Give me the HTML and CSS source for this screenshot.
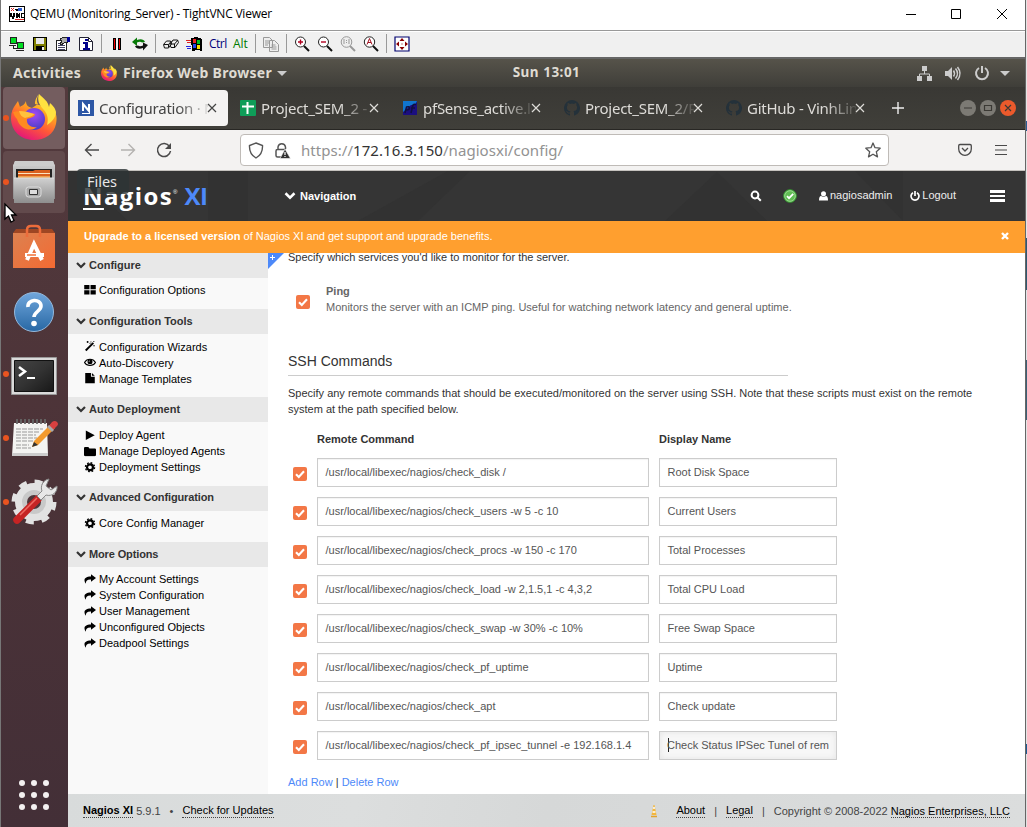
FILE: index.html
```html
<!DOCTYPE html>
<html lang="en">
<head>
<meta charset="utf-8">
<title>QEMU (Monitoring_Server) - TightVNC Viewer</title>
<link rel="stylesheet" href="styles.css">
</head>
<body>
<svg class="defs" width="0" height="0">
  <defs>
    <linearGradient id="fox" x1=".8" y1="0" x2=".3" y2="1"><stop offset="0" stop-color="#fff44f"/><stop offset=".35" stop-color="#ffa820"/><stop offset=".65" stop-color="#ff5a36"/><stop offset="1" stop-color="#e3147c"/></linearGradient>
    <radialGradient id="globe" cx=".5" cy=".3" r=".8"><stop offset="0" stop-color="#a04bf5"/><stop offset="1" stop-color="#3f3bbd"/></radialGradient>
    <linearGradient id="metal" x2="0" y2="1"><stop offset="0" stop-color="#d0d0d0"/><stop offset="1" stop-color="#8e8e8e"/></linearGradient>
    <linearGradient id="bag" x2="1" y2="1"><stop offset="0" stop-color="#dc8150"/><stop offset="1" stop-color="#f46a32"/></linearGradient>
    <linearGradient id="blue" x2="0" y2="1"><stop offset="0" stop-color="#70a6dc"/><stop offset="1" stop-color="#2868a4"/></linearGradient>
    <linearGradient id="term" x2="1" y2="1"><stop offset="0" stop-color="#444"/><stop offset=".5" stop-color="#333"/><stop offset="1" stop-color="#181818"/></linearGradient>
  </defs>
  <symbol id="i-fox" viewBox="0 0 46 46">
    <path d="M28 0c-4 5-4 8-4 10 6 1 9 3 12 6-1 2 1 4 2 4l5-4c3 5 3 9 2 14C43 40 34 46 23 46 10 46 0 37 0 24c0-6 2-10 5-14l2-3 2 6c2-2 4-1 6-6 0 4 2 6 6 7l6-4C25 7 26 3 28 0z" fill="url(#fox)"/>
    <circle cx="23" cy="25" r="11" fill="url(#globe)"/>
    <path d="M28 0c-2 6 0 10 4 15 4 4 6 9 4 16 5-3 9-8 9-13-1-5-4-7-6-9l-1 4C37 7 33 5 28 0z" fill="#ffe240"/>
    <path d="M2 18c3-1 6-1 9 0 5 1 9 1 13 2 0 3-5 4-8 5-1 6 5 9 10 8-5 5-17 3-20-8C4 23 3 21 2 18z" fill="#ff8a21"/>
    <path d="M8 17c5 0 10 1 15 3-1 2-5 3-9 4-3-1-5-3-6-7z" fill="#ffc13d"/>
  </symbol>
  <symbol id="i-chev" viewBox="0 0 10 8"><path d="M1 2l4 4 4-4" fill="none" stroke="currentColor" stroke-width="2.2"/></symbol>
  <symbol id="i-grid" viewBox="0 0 11 10"><path d="M0 0h5v4H0zM6 0h5v4H6zM0 5h5v4H0zM6 5h5v4H6z" fill="currentColor"/></symbol>
  <symbol id="i-wand" viewBox="0 0 11 11"><path d="M1 10L9 2" stroke="currentColor" stroke-width="2"/><path d="M2 1h2M3 0v2M6 1h1M9 5h1.5M9.500 0v1M5 2.500h1" stroke="currentColor" stroke-width="1"/></symbol>
  <symbol id="i-eye" viewBox="0 0 12 10"><path d="M.5 5.200C3 1 9 1 11.500 5.200 9 9.200 3 9.200.5 5.200z" fill="none" stroke="currentColor" stroke-width="1.100"/><circle cx="6" cy="4.600" r="2.500" fill="currentColor"/><path d="M5 4.500a1 1 0 011-1" stroke="#fff" fill="none" stroke-width=".6"/></symbol>
  <symbol id="i-file" viewBox="0 0 10 11"><path d="M0 0h6v4h4v7H0zM7 0l3 3H7z" fill="currentColor"/></symbol>
  <symbol id="i-play" viewBox="0 0 10 10"><path d="M1 .5l8.500 4.500L1 9.500z" fill="currentColor"/></symbol>
  <symbol id="i-folder" viewBox="0 0 11 9"><path d="M0 1.500Q0 .5 1 .5h3l1 1.500h5q1 0 1 1V8q0 1-1 1H1Q0 9 0 8z" fill="currentColor"/></symbol>
  <symbol id="i-gear" viewBox="0 0 10 10"><circle cx="5" cy="5" r="2.800" fill="none" stroke="currentColor" stroke-width="2.100"/><circle cx="5" cy="5" r="4.300" fill="none" stroke="currentColor" stroke-width="1.400" stroke-dasharray="1.690 1.690"/></symbol>
  <symbol id="i-share" viewBox="0 0 12 10"><path d="M7 0l5 3.700-5 3.800V5.200C3.500 5 2 6 1.700 9.500-.5 6-.3 2.300 7 2.200z" fill="currentColor"/></symbol>
  <symbol id="i-check" viewBox="0 0 14 14"><path d="M3 7.200l2.800 2.800L11 4.200" fill="none" stroke="#fff" stroke-width="2.100"/></symbol>
  <symbol id="i-x" viewBox="0 0 10 10"><path d="M1 1l8 8M9 1L1 9" fill="none" stroke="currentColor" stroke-width="1.200"/></symbol>
  <symbol id="i-power" viewBox="0 0 16 16"><path d="M5 3a6 6 0 106 0M8 1v7" fill="none" stroke="currentColor" stroke-width="2"/></symbol>
  <symbol id="i-git" viewBox="0 0 16 16"><path d="M8 0a8 8 0 00-2.500 15.600c.4.100.5-.2.500-.4V13.600c-2.200.5-2.700-1-2.700-1-.4-.9-.9-1.200-.9-1.200-.7-.5.1-.5.100-.5.800.1 1.200.8 1.200.8.700 1.200 1.900.9 2.300.7.100-.5.300-.9.500-1.100-1.800-.2-3.600-.9-3.600-4 0-.9.300-1.600.8-2.100-.1-.2-.4-1 .1-2.100 0 0 .7-.2 2.200.8a7.500 7.500 0 014 0c1.500-1 2.200-.8 2.200-.8.4 1.100.2 1.900.1 2.100.5.600.8 1.300.8 2.100 0 3.100-1.900 3.700-3.700 3.900.3.300.6.800.6 1.500v2.500c0 .2.100.5.500.4A8 8 0 008 0z" fill="#24313a"/></symbol>
</svg>

<div class="viewer">
  <header class="titlebar">
    <svg class="vnc-logo" width="16" height="16" viewBox="0 0 16 16" shape-rendering="crispEdges"><path d="M.5.500h15v15H.5z" fill="#fff" stroke="#000"/><path d="M2 2h1v1H2zM4 2h1v1H4zM3 3h1v1H3zM2 4h1v1H2zM4 4h1v1H4z" fill="#d22"/><path d="M6 3h4M7 4h5" stroke="#000"/><path d="M9 2h4v3H9z" fill="#2a5bd0"/><path d="M1 7h2v3h1V7h2v4H5v2H3v-2H1zM7 7h2l1 2V7h1v5h-1L9 10v2H7zM12 7h3v1h-2v3h2v1h-3z"/><path d="M6 13h9v1H6z" fill="#d22"/></svg>
    <span class="title">QEMU (Monitoring_Server) - TightVNC Viewer</span>
    <svg class="win-controls" width="104" height="12" viewBox="0 0 104 12" fill="none" stroke="#000"><path d="M1 6.500h10M46.500 1.500h9v9h-9zM92 1l10 10M102 1L92 11"/></svg>
  </header>

  <div class="toolbar">
    <svg width="16" height="16" viewBox="0 0 16 16" shape-rendering="crispEdges"><path d="M1 1h7v7H1z" fill="#222"/><path d="M2 2h5v5H2z" fill="#0d2"/><path d="M8 6h7v7H8z" fill="#222"/><path d="M9 7h5v5H9z" fill="#0d2"/><path d="M0 9.500h7M7 14.500h8M4.500 9v3h3" stroke="#222" fill="none"/></svg>
    <svg width="16" height="16" viewBox="0 0 16 16" shape-rendering="crispEdges"><path d="M1 1h14v14H1z"/><path d="M2 2h2v6h8V2h2v12H2z" fill="#808000"/><path d="M4 2h8v6H4z" fill="#e8e8e8"/><path d="M4 10h8v5H4z"/><path d="M10 11h2v3h-2z" fill="#eee"/></svg>
    <svg width="16" height="16" viewBox="0 0 16 16" shape-rendering="crispEdges"><path d="M1.500 4.500h10v10h-10z" fill="#fff" stroke="#222"/><path d="M3 9h7M3 11h7M3 13h7M3 7h3" stroke="#446"/><path d="M5 3l4-2h4v5l-4 1-3 2-1-2 2-1z" fill="#aaa" stroke="#222"/><path d="M12 1h3v5h-3z" fill="#009"/></svg>
    <svg width="16" height="16" viewBox="0 0 16 16"><path d="M1.500 1.500h9l4 4v9h-13z" fill="#fff" stroke="#223"/><path d="M10.500 1.500v4h4" fill="none" stroke="#223"/><path d="M7 3h3v2H7zM5 6h5v6h2v2H5v-2h2V8H5z" fill="#00008b"/></svg>
    <i class="sep"></i>
    <svg width="16" height="16" viewBox="0 0 16 16" shape-rendering="crispEdges"><path d="M4 2h3v12H4zM9 2h3v12H9z"/><path d="M5 3h1v10H5zM10 3h1v10h-1z" fill="#e00"/></svg>
    <svg width="16" height="16" viewBox="0 0 16 16"><path d="M0 6l5-4.500V4c4-1.500 7-.5 8 2l-3 .5C9 5.500 7 5.500 5 6.500V10z" fill="#087a08"/><path d="M16 9l-5 5.500V12c-4 1.500-7 .5-8-2l3-.5c1 1 3 1 5 0V6.500z" fill="#111"/></svg>
    <i class="sep"></i>
    <svg width="16" height="16" viewBox="0 0 16 16" fill="#eee" stroke="#111"><path d="M.5 8.500l3-3.500h4l1 3-3 4h-4zM7 8.500L10 4h4.500l1 2.500-3.500 5H8zM1 8.500h4.500l3-3.500M5.500 8.500v3M7.500 8h4l3.500-4M11.500 8v3.500"/></svg>
    <svg width="16" height="16" viewBox="0 0 16 16" shape-rendering="crispEdges"><path d="M5 2l5-1 6 2v12l-4-1-6 1z"/><path d="M7 3h3v4H7z" fill="#e22"/><path d="M11 4h3v4h-3z" fill="#0b2"/><path d="M7 8h3v4H7z" fill="#24e"/><path d="M11 9h3v4h-3z" fill="#fd0"/><path d="M0 4h5M1 6h4" stroke="#d22"/><path d="M0 10h5M1 12h4" stroke="#22d"/></svg>
    <span class="key ctrl">Ctrl</span>
    <span class="key alt">Alt</span>
    <i class="sep"></i>
    <svg width="16" height="16" viewBox="0 0 16 16" fill="#eee" stroke="#999"><path d="M.5 1.500h6l3 3v7h-9zM6.500 4.500h5l4 4v7h-9zM2 5h4M2 7h4M2 9h3M8.500 9h4M8.500 11h5M8.500 13h5"/></svg>
    <i class="sep"></i>
    <svg width="16" height="16" viewBox="0 0 16 16" fill="none"><circle cx="6.500" cy="6" r="5" fill="#fff" stroke="#222"/><path d="M10 10l5 5" stroke="#111" stroke-width="2"/><path d="M4 6h5M6.500 3.500v5" stroke="#b00020" stroke-width="1.400"/></svg>
    <svg width="16" height="16" viewBox="0 0 16 16" fill="none"><circle cx="6.500" cy="6" r="5" fill="#fff" stroke="#222"/><path d="M10 10l5 5" stroke="#111" stroke-width="2"/><path d="M4 6h5" stroke="#b00020" stroke-width="1.400"/></svg>
    <svg width="16" height="16" viewBox="0 0 16 16" fill="none" stroke="#999"><circle cx="6.500" cy="6" r="5.300" fill="#eee"/><path d="M10 10l5 5" stroke-width="2"/><path d="M4 3v5M9 3v5M6.500 4v1M6.500 6v1"/></svg>
    <svg width="16" height="16" viewBox="0 0 16 16" fill="none"><circle cx="6.500" cy="6" r="5.200" fill="#fff" stroke="#222"/><path d="M10 10l5 5" stroke="#111" stroke-width="2"/><path d="M4 8.500l2.500-6L9 8.500M5 6.500h3" stroke="#a01020"/></svg>
    <i class="sep"></i>
    <svg width="16" height="16" viewBox="0 0 16 16"><path d="M1 1h14v14H1z" fill="#fff" stroke="#00006e" stroke-width="1.200"/><path d="M8 2l2.500 3h-5zM8 14l2.500-3h-5zM2 8l3-2.500v5zM14 8l-3-2.500v5z" fill="#8b0000"/><path d="M7.500 7.500h1v1h-1z" fill="#8b0000"/></svg>
  </div>

  <div class="gnome">
    <span class="activities">Activities</span>
    <svg class="mini-fox" width="16" height="16"><use href="#i-fox"/></svg>
    <span class="app-name">Firefox Web Browser</span>
    <i class="caret"></i>
    <span class="clock">Sun 13:01</span>
    <div class="tray">
      <svg width="15" height="15" viewBox="0 0 15 15"><path d="M5 0h5v5H5zM0 10h5v5H0zM10 10h5v5h-5z" fill="#ccc"/><path d="M7.500 5v3M2.500 10V8h10v2" fill="none" stroke="#ccc"/></svg>
      <svg width="16" height="15" viewBox="0 0 16 15"><path d="M0 5h3l4-4v13l-4-4H0z" fill="#ccc"/><path d="M8.500 4.500q2 3 0 6M10.500 2.500q4 5 0 10M12.500 1q5 6.500 0 13" fill="none" stroke="#ccc" stroke-width="1.500"/></svg>
      <svg width="16" height="16"><use href="#i-power"/></svg>
      <i class="caret"></i>
    </div>
  </div>

  <div class="desktop">
    <nav class="dock">
      <div class="tile focus run"><svg width="46" height="46"><use href="#i-fox"/></svg></div>
      <div class="tile hover run"><svg width="44" height="46" viewBox="0 0 44 46"><path d="M3 2h38l2 5v33H1V7z" fill="url(#metal)"/><path d="M3 2h38l2 5H1z" fill="#ccc"/><path d="M4 10h36v10H4z" fill="#222"/><path d="M6 12h15l2-1h15v10H6z" fill="#d9601e"/><path d="M6 14h32v1H6z" fill="#fbe3c0"/><path d="M6 17h32v3H6z" fill="#efa14e"/><path d="M2 19h40v25H2z" fill="url(#metal)"/><path d="M2 19h40" stroke="#ddd"/><rect x="14" y="28" width="15" height="10" rx="2.500" fill="#aaa" stroke="#ddd"/><path d="M17.500 30.500h8v5h-8z" fill="#ddd" stroke="#333"/></svg></div>
      <div class="tile low"><svg width="44" height="46" viewBox="0 0 44 46"><path d="M1 8h42v35H1z" fill="url(#bag)"/><path d="M1 8l3-4h36l3 4z" fill="#9e4623"/><path d="M15 12V5q0-4 4-4h5q4 0 4 4v7" fill="none" stroke="#ec6c3b" stroke-width="2.500"/><path d="M15 35l7-16 8 16" fill="none" stroke="#fff" stroke-width="4"/><path d="M13 30h19" stroke="#fff" stroke-width="4"/><path d="M15 30h9" stroke="#f27036" stroke-width="1.500"/></svg></div>
      <div class="tile low"><svg width="42" height="42" viewBox="0 0 42 42"><circle cx="21" cy="21" r="19.500" fill="url(#blue)" stroke="#95b9dc"/><path d="M15 16c-1-8 13-9 13-1 0 5-7 6-7 11" fill="none" stroke="#fff" stroke-width="3.600"/><circle cx="21" cy="32.500" r="2.800" fill="#fff"/></svg></div>
      <div class="tile low run"><svg width="46" height="38" viewBox="0 0 46 38"><path d="M.5.500h45v37H.5z" fill="#dadada" stroke="#999"/><path d="M3.500 3.500h39v31h-39z" fill="url(#term)" stroke="#111"/><path d="M8 10l6 4.500L8 19" fill="none" stroke="#fff" stroke-width="2.500"/><path d="M16 21h8" stroke="#fff" stroke-width="2"/></svg></div>
      <div class="tile run"><svg width="46" height="38" viewBox="0 0 46 38"><path d="M3 4h33l1 33H1z" fill="#f4f4f2"/><path d="M1 34h36v3H1z" fill="#ccc"/><path d="M6 0v5M10 0v5M14 0v5M18 0v5M22 0v5M26 0v5M30 0v5M34 0v5" stroke="#666" stroke-width="1.800"/><path d="M5 10h27M5 13h24M5 16h20M5 19h21M5 22h17M5 26h13M5 29h15" stroke="#999" stroke-dasharray="5 1"/><path d="M21 28l2-6L40 5l4 4-17 17z" fill="#f29a2e"/><path d="M38 7l3-4q3-2 5 0t0 4l-4 4z" fill="#d94040"/><path d="M36 8l2-2 5 5-2 2z" fill="#aaa"/><path d="M21 28l2-5 4 3z" fill="#333"/></svg></div>
      <div class="tile high run"><svg width="46" height="46" viewBox="0 0 46 46"><circle cx="23" cy="24" r="14" fill="none" stroke="#e2e2e2" stroke-width="10"/><circle cx="23" cy="24" r="19" fill="none" stroke="#e2e2e2" stroke-width="7" stroke-dasharray="7.460 7.460"/><circle cx="23" cy="24" r="9.500" fill="#4e3539" stroke="#c8c8c8" stroke-width="5"/><path d="M6 42L27 21" stroke="#c52424" stroke-width="7.500" stroke-linecap="round"/><path d="M9 37L26 20" stroke="#ef6a62" stroke-width="1.500"/><path d="M26 18l5-5c-2-5 1-11 7-12l-3 7 5 4 6-4c1 6-5 11-11 9l-5 5z" fill="#e8e8e8" stroke="#888"/></svg></div>
      <svg class="apps" width="30" height="30" viewBox="0 0 30 30" fill="#f3f0f0"><circle cx="3" cy="3" r="3"/><circle cx="15" cy="3" r="3"/><circle cx="27" cy="3" r="3"/><circle cx="3" cy="15" r="3"/><circle cx="15" cy="15" r="3"/><circle cx="27" cy="15" r="3"/><circle cx="3" cy="27" r="3"/><circle cx="15" cy="27" r="3"/><circle cx="27" cy="27" r="3"/></svg>
      <svg class="pointer" width="13" height="20" viewBox="0 0 13 20"><path d="M1 1v15l3.500-3 2.500 6 3-1.500-2.500-5.500H12z" fill="#fff" stroke="#000" stroke-width="1.300"/></svg>
    </nav>

    <div class="browser">
      <div class="tabs">
        <div class="tab active"><svg width="16" height="16" viewBox="0 0 16 16"><path d="M0 0h16v16H0z" fill="#2d57a5"/><path d="M5 11V4l6 7V4" fill="none" stroke="#fff" stroke-width="2"/><path d="M4 13.500h8" stroke="#fff"/></svg><span>Configuration · Nagios</span><svg class="close" width="10" height="10"><use href="#i-x"/></svg></div>
        <div class="tab"><svg width="16" height="16" viewBox="0 0 16 16"><rect width="16" height="16" rx="1" fill="#0f9d58"/><path d="M7.500 2v12M2 6.500h12" stroke="#fff" stroke-width="2"/></svg><span>Project_SEM_2 - Goo</span><svg class="close" width="10" height="10"><use href="#i-x"/></svg></div>
        <div class="tab"><svg width="16" height="16" viewBox="0 0 16 16"><path d="M1 1h14v14H1z" fill="#1b0f80"/><path d="M1 1h14L13 5 9 5 1 12z" fill="#1075d0"/><path d="M3 13l1.500-6q3-1 3 1t-3 2M9 13l2-8q1-1 3-.5M9 8h4" fill="none" stroke="#101040" stroke-width="1.500"/></svg><span>pfSense_active.local</span><svg class="close" width="10" height="10"><use href="#i-x"/></svg></div>
        <div class="tab"><svg width="16" height="16"><use href="#i-git"/></svg><span>Project_SEM_2/READ</span><svg class="close" width="10" height="10"><use href="#i-x"/></svg></div>
        <div class="tab"><svg width="16" height="16"><use href="#i-git"/></svg><span>GitHub - VinhLinh</span><svg class="close" width="10" height="10"><use href="#i-x"/></svg></div>
        <svg class="plus" width="12" height="12" viewBox="0 0 12 12"><path d="M6 0v12M0 6h12" stroke="#eee" stroke-width="1.400"/></svg>
        <svg class="wm" width="56" height="16" viewBox="0 0 56 16"><circle cx="8" cy="8" r="8" fill="#7c7a74"/><circle cx="28" cy="8" r="8" fill="#7c7a74"/><circle cx="48" cy="8" r="8" fill="#eb5a2c"/><path d="M4 8h8M24.500 5.500h7v5h-7zM45 5l6 6M51 5l-6 6" stroke="#3b3934" stroke-width="1.200" fill="none"/></svg>
      </div>

      <div class="navbar">
        <svg width="16" height="14" viewBox="0 0 16 14" fill="none" stroke="#4a4a4a" stroke-width="1.400"><path d="M15 7H2M7.500 1L1.500 7l6 6"/></svg>
        <svg width="16" height="14" viewBox="0 0 16 14" fill="none" stroke="#b4b2b0" stroke-width="1.400"><path d="M1 7h13M8.500 1l6 6-6 6"/></svg>
        <svg width="16" height="16" viewBox="0 0 16 16"><path d="M13.500 4.500A6.500 6.500 0 1014.500 9" fill="none" stroke="#4a4a4a" stroke-width="1.500"/><path d="M15 1v6H9z" fill="#4a4a4a"/></svg>
        <div class="url">
          <svg width="16" height="17" viewBox="0 0 16 17"><path d="M8 1l6.500 2.500c.3 6-2 10-6.500 12.500C3.500 13.500 1.200 9.500 1.500 3.500z" fill="none" stroke="#555" stroke-width="1.400"/></svg>
          <svg class="lock" width="17" height="17" viewBox="0 0 17 17"><path d="M4 8V5a3.800 3.800 0 017.500 0v2M7 15H3.500q-1.500 0-1.500-1.500V9q0-1.500 1.500-1.500h8" fill="none" stroke="#555" stroke-width="1.500"/><path d="M11 7l5.500 9.500H6z" fill="#333" stroke="#fff" stroke-width=".6"/><path d="M11 10v3M11 14v1" stroke="#fff" stroke-width="1.200"/></svg>
          <span class="address">https://<b>172.16.3.150</b>/nagiosxi/config/</span>
          <svg width="16" height="16" viewBox="0 0 16 16"><path d="M8 1l2 4.700 5.200.5-3.900 3.500 1.200 5.200L8 12.200l-4.500 2.700 1.200-5.200L.8 6.200 6 5.700z" fill="none" stroke="#555" stroke-width="1.300" stroke-linejoin="round"/></svg>
        </div>
        <svg class="pocket" width="14" height="14" viewBox="0 0 14 14" fill="none" stroke="#4a4a4a" stroke-width="1.300"><path d="M2 1.500h10q1.300 0 1.300 1.300V6a6.300 6.300 0 01-12.600 0V2.800Q.7 1.500 2 1.500zM4 5l3 3 3-3"/></svg>
        <svg class="burger" width="12" height="12" viewBox="0 0 12 12" stroke="#4a4a4a" stroke-width="1.200"><path d="M0 1.500h12M0 6h12M0 10.500h12"/></svg>
      </div>

      <header class="page-head">
        <svg class="facets" viewBox="0 0 957 50" preserveAspectRatio="none"><path d="M0 0h8l52 50H0zM380 0h22L350 50h-60zM597 50L649 1l50 49zM140 0h40v50h-40zM787 0h48v50z" fill="#2f2f2f"/></svg>
        <div class="logo"><span class="word"><u>N</u>agios</span><sup>®</sup><span class="xi">XI</span></div>
        <svg class="nav-chev" width="12" height="9"><use href="#i-chev"/></svg><b class="nav-label">Navigation</b>
        <div class="head-right">
          <svg class="search" width="12" height="12" viewBox="0 0 12 12" fill="none" stroke="#fff" stroke-width="2"><circle cx="5" cy="5" r="3.400"/><path d="M7.500 7.500l3.300 3.300"/></svg>
          <svg class="status" width="14" height="14" viewBox="0 0 14 14"><circle cx="7" cy="7" r="6.300" fill="#61bd54" stroke="#359b30"/><circle cx="7" cy="7" r="5.300" fill="none" stroke="#a7df9f" stroke-width=".8"/><path d="M4 7.200l2 2 4.200-4.400" fill="none" stroke="#fff" stroke-width="1.700"/></svg>
          <svg class="user" width="9" height="10" viewBox="0 0 9 10" fill="#fff"><circle cx="4.500" cy="2.800" r="2.500"/><path d="M0 9.500Q0 5 2 5q2.500 1.500 5 0 2 0 2 4.500z"/></svg><span>nagiosadmin</span>
          <svg class="off" width="10" height="10" viewBox="0 0 10 10"><path d="M3 1.700a4 4 0 104 0M5 0v5" fill="none" stroke="#fff" stroke-width="1.700"/></svg><span>Logout</span>
          <svg class="menu" width="15" height="12" viewBox="0 0 15 12" shape-rendering="crispEdges"><path d="M0 0h15v3H0zM0 5h15v2H0zM0 9h15v3H0z" fill="#fff"/></svg>
        </div>
        <div class="tooltip">Files</div>
      </header>

      <div class="banner"><span><b>Upgrade to a licensed version</b> of Nagios XI and get support and upgrade benefits.</span>
        <svg width="8" height="8" viewBox="0 0 8 8"><path d="M1 1l6 6M7 1L1 7" stroke="#fff" stroke-width="2.400"/></svg></div>

      <div class="body">
        <aside class="side">
          <h3><svg width="10" height="8"><use href="#i-chev"/></svg>Configure</h3>
          <ul><li><svg><use href="#i-grid"/></svg>Configuration Options</li></ul>
          <h3><svg width="10" height="8"><use href="#i-chev"/></svg>Configuration Tools</h3>
          <ul><li><svg><use href="#i-wand"/></svg>Configuration Wizards</li><li><svg><use href="#i-eye"/></svg>Auto-Discovery</li><li><svg><use href="#i-file"/></svg>Manage Templates</li></ul>
          <h3><svg width="10" height="8"><use href="#i-chev"/></svg>Auto Deployment</h3>
          <ul><li><svg><use href="#i-play"/></svg>Deploy Agent</li><li><svg><use href="#i-folder"/></svg>Manage Deployed Agents</li><li><svg><use href="#i-gear"/></svg>Deployment Settings</li></ul>
          <h3 class="tight"><svg width="10" height="8"><use href="#i-chev"/></svg>Advanced Configuration</h3>
          <ul><li><svg><use href="#i-gear"/></svg>Core Config Manager</li></ul>
          <h3 class="tight"><svg width="10" height="8"><use href="#i-chev"/></svg>More Options</h3>
          <ul><li><svg><use href="#i-share"/></svg>My Account Settings</li><li><svg><use href="#i-share"/></svg>System Configuration</li><li><svg><use href="#i-share"/></svg>User Management</li><li><svg><use href="#i-share"/></svg>Unconfigured Objects</li><li><svg><use href="#i-share"/></svg>Deadpool Settings</li></ul>
        </aside>

        <main class="content">
          <svg class="corner" width="16" height="16" viewBox="0 0 16 16"><path d="M0 0h16L0 16z" fill="#4d89f9"/><path d="M2 4.500h5M4.500 2v5" stroke="#fff"/></svg>
          <p class="intro">Specify which services you'd like to monitor for the server.</p>
          <div class="service"><svg class="box"><use href="#i-check"/></svg><div><b>Ping</b><br>Monitors the server with an ICMP ping. Useful for watching network latency and general uptime.</div></div>
          <h2>SSH Commands</h2>
          <p class="desc">Specify any remote commands that should be executed/monitored on the server using SSH. Note that these scripts must exist on the remote system at the path specified below.</p>
          <div class="grid">
            <span></span><b>Remote Command</b><b>Display Name</b>
            <svg class="box"><use href="#i-check"/></svg><div class="field">/usr/local/libexec/nagios/check_disk /</div><div class="field">Root Disk Space</div>
            <svg class="box"><use href="#i-check"/></svg><div class="field">/usr/local/libexec/nagios/check_users -w 5 -c 10</div><div class="field">Current Users</div>
            <svg class="box"><use href="#i-check"/></svg><div class="field">/usr/local/libexec/nagios/check_procs -w 150 -c 170</div><div class="field">Total Processes</div>
            <svg class="box"><use href="#i-check"/></svg><div class="field">/usr/local/libexec/nagios/check_load -w 2,1.5,1 -c 4,3,2</div><div class="field">Total CPU Load</div>
            <svg class="box"><use href="#i-check"/></svg><div class="field">/usr/local/libexec/nagios/check_swap -w 30% -c 10%</div><div class="field">Free Swap Space</div>
            <svg class="box"><use href="#i-check"/></svg><div class="field">/usr/local/libexec/nagios/check_pf_uptime</div><div class="field">Uptime</div>
            <svg class="box"><use href="#i-check"/></svg><div class="field">/usr/local/libexec/nagios/check_apt</div><div class="field">Check update</div>
            <svg class="box"><use href="#i-check"/></svg><div class="field">/usr/local/libexec/nagios/check_pf_ipsec_tunnel -e 192.168.1.4</div><div class="field focused"><i class="cursor"></i><span>Check Status IPSec Tunel of rem</span></div>
          </div>
          <p class="links"><a>Add Row</a> | <a>Delete Row</a></p>
        </main>
      </div>

      <footer class="foot">
        <a class="strong">Nagios XI</a><span class="ver">5.9.1</span><span class="dot">•</span><a>Check for Updates</a>
        <div class="foot-right">
          <svg width="8" height="14" viewBox="0 0 8 14"><path d="M3.500 1h1L6.500 11h-5z" fill="#f3b73c"/><path d="M3 4h2M2.500 8h3" stroke="#fff" stroke-width="1.300"/><path d="M1 12.500h6" stroke="#e4a32a" stroke-width="1.500"/></svg>
          <a>About</a><span class="bar">|</span><a>Legal</a><span class="bar">|</span><span>Copyright © 2008-2022 <a>Nagios Enterprises, LLC</a></span>
        </div>
      </footer>
    </div>
  </div>
</div>
</body>
</html>
```
FILE: styles.css
```css
* { box-sizing: border-box; }
body { margin: 0; width: 1027px; height: 827px; overflow: hidden; font: 11px/16px "Liberation Sans", Arial, sans-serif; color: #333;
  background: linear-gradient(#e4e4e4 0 121px, #2a5b93 121px 131px, #e4e4e4 131px 238px, #2d5870 238px 290px, #e0e3e6 290px 360px, #3b6075 360px 420px, #e4e4e4 420px 744px, #1d5b93 744px 754px, #e0e0e0 754px); }
svg { display: block; flex: none; overflow: visible; }
.defs { position: absolute; }
ul, p, h2, h3 { margin: 0; padding: 0; list-style: none; }
.viewer { width: 1026px; height: 827px; border-left: 1px solid #777; border-right: 1px solid #666; display: flex; flex-direction: column; }

.titlebar { height: 31px; flex: none; background: #fff; border-bottom: 1px solid #999; display: flex; align-items: center; padding: 0 16px 2px 8px; }
.title { font: 12px/16px "Open Sans", sans-serif; color: #000; margin-left: 5px; letter-spacing: -0.22px; }
.win-controls { margin-left: auto; }
.toolbar { height: 28px; flex: none; background: #f0f0f0; border-top: 1px solid #fff; border-bottom: 2px solid #666; display: flex; align-items: center; gap: 7px; padding: 0 8px 2px; }
.sep { width: 1px; height: 19px; background: #999; }
.key { font: 12px/16px "Open Sans", sans-serif; white-space: nowrap; }
.ctrl { color: #00007a; width: 17px; letter-spacing: -0.5px; }
.alt { color: #007a00; width: 15px; }

.gnome { height: 28px; flex: none; background: linear-gradient(#56534a, #3f3e39); display: flex; align-items: center; position: relative; padding-left: 12px; color: #dfdbd2; font: bold 14px/20px "Noto Sans", sans-serif; letter-spacing: .3px; }
.mini-fox { margin-left: 20px; }
.app-name { margin-left: 6px; }
.caret { border: 5px solid transparent; border-top-color: #ccc; border-bottom: 0; margin-left: 5px; }
.clock { position: absolute; left: 67px; right: 0; top: 3px; text-align: center; font-size: 13.5px; letter-spacing: .5px; }
.tray { margin-left: auto; display: flex; align-items: center; gap: 13px; padding-right: 15px; color: #ccc; }
.tray .caret { margin-left: -3px; }

.desktop { flex: 1; min-height: 0; display: flex; }
.dock { width: 67px; flex: none; background: linear-gradient(#533a3d, #4c3338 50%, #432f37); display: flex; flex-direction: column; gap: 2px; padding-left: 2px; position: relative; }
.tile { width: 62px; height: 62px; flex: none; border-radius: 4px; display: flex; align-items: center; justify-content: center; position: relative; }
.tile.focus { background: #745d5f; padding-bottom: 2px; }
.tile.hover { background: #624a4c; }
.tile.low { padding-top: 3px; }
.tile.high { padding-bottom: 3px; }
.run::before { content: ""; position: absolute; left: 0; top: 28px; width: 6px; height: 6px; border-radius: 50%; background: #e95420; }
.apps { margin: auto 0 17px 16px; }
.pointer { position: absolute; left: 3px; top: 116px; }

.browser { flex: 1; min-width: 0; display: flex; flex-direction: column; }
.tabs { height: 43px; flex: none; background: linear-gradient(#393834, #403f3a); border-bottom: 1px solid #282724; display: flex; align-items: center; gap: 4px; padding: 0 9px 1px 2px; }
.tab { width: 158px; height: 36px; border-radius: 4px; display: flex; align-items: center; padding-left: 8px; color: #dedcd8; font: 15px/20px "Noto Sans", sans-serif; }
.tab span { margin-left: 5px; width: 109px; overflow: hidden; white-space: nowrap; letter-spacing: -0.25px; -webkit-mask-image: linear-gradient(90deg, #000 72%, transparent 104%); mask-image: linear-gradient(90deg, #000 72%, transparent 104%); }
.tab.active { background: #f4f3f2; color: #444; }
.close { margin-left: -1px; }
.plus { margin-left: 12px; }
.wm { margin-left: auto; }
.navbar { height: 41px; flex: none; background: #f3f2f1; border-bottom: 1px solid #c5c2be; display: flex; align-items: center; gap: 20px; padding-left: 16px; }
.url { width: 649px; height: 32px; margin-left: 48px; border: 1px solid #bfbbb7; border-radius: 4px; background: #fff; display: flex; align-items: center; padding: 0 7px; }
.lock { margin-left: 10px; }
.address { flex: 1; margin-left: 10px; font: 15px/20px "Noto Sans", sans-serif; letter-spacing: .05px; color: #929292; }
.address b { font-weight: normal; color: #333; }
.pocket { margin-left: 49px; }
.burger { margin-left: 3px; }

.page-head { height: 50px; flex: none; background: #353535; display: flex; align-items: center; position: relative; padding: 0 20px 1px 15px; color: #fff; }
.facets { position: absolute; left: 0; top: 0; width: 100%; height: 100%; opacity: .5; }
.logo, .nav-chev, .nav-label, .head-right { position: relative; }
.logo { width: 201px; display: flex; align-items: baseline; }
.word { font: bold 24px/28px "Open Sans", "Noto Sans", sans-serif; letter-spacing: 1.4px; width: 90px; }
.word u { text-underline-offset: 3px; text-decoration-thickness: 2px; }
.logo sup { font-size: 6px; line-height: 6px; align-self: flex-start; margin-top: 7px; }
.xi { font: bold 24px/28px "Open Sans", sans-serif; color: #4d89f9; margin-left: 7px; letter-spacing: -.5px; }
.nav-label { margin-left: 4px; }
.head-right { margin-left: auto; display: flex; align-items: center; color: #eee; }
.head-right span { margin-top: -1px; }
.status { margin-left: 21px; }
.user { margin: 0 2px 0 22px; }
.off { margin: 0 2px 0 18px; }
.menu { margin-left: 34px; }
.tooltip { position: absolute; left: 9px; top: -2px; width: 52px; height: 25px; border-radius: 4px; background: rgba(45, 52, 54, .82); color: #e8e8e8; font: 14.500px/25px "Noto Sans", sans-serif; text-align: center; padding-right: 2px; }
.banner { height: 32px; flex: none; background: #ff9f2f; color: #fff; display: flex; align-items: center; justify-content: space-between; padding: 0 16px 2px; }

.body { flex: 1; min-height: 0; display: flex; }
.side { width: 200px; flex: none; background: #f9f9f9; }
.side h3 { height: 25px; background: #e8e8e8; display: flex; align-items: center; padding: 0 0 1.2px 8px; font: bold 11px/16px "Liberation Sans", sans-serif; }
.side h3.tight { letter-spacing: -.13px; }
.side h3 svg { margin-right: 3px; }
.side ul { padding: 4.4px 0 10.8px 16px; color: #000; }
.side li { height: 16px; display: flex; align-items: center; gap: 3px; }
.side li svg { width: 12px; height: 10.5px; }
.content { flex: 1; background: #fff; position: relative; padding-left: 20px; overflow: hidden; }
.corner { position: absolute; left: 0; top: 0; }
.intro { margin-top: -4px; }
.service { display: flex; margin: 18px 0 0 8px; color: #666; }
.box { width: 14px; height: 14px; border-radius: 2px; background: #f37746; }
.service .box { margin: 12px 16px 0 0; }
h2 { width: 500px; margin-top: 36px; height: 25px; border-bottom: 1px solid #ccc; font: 14px/20px "Liberation Sans", sans-serif; }
.desc { margin-top: 9px; width: 700px; }
.grid { display: grid; grid-template-columns: 19px 332px 178px; column-gap: 10px; row-gap: 10px; margin-top: 14px; }
.grid > b { margin-bottom: 1px; }
.grid .box { margin: 9px 0 0 5px; }
.field { height: 29px; border: 1px solid #ccc; padding: 5px 7px 5px 7.500px; color: #555; box-shadow: inset 0 1px 1px rgba(0,0,0,.05); white-space: nowrap; display: flex; }
.focused { background: #f7f7f7; box-shadow: inset 0 0 6px #e4e4e4; }
.cursor { width: 1px; height: 14px; background: #222; margin: 1px -1px 0 0; }
.links { margin-top: 14px; }
.links a { color: #4d89f9; }
.foot { height: 33px; flex: none; background: linear-gradient(100deg, #d8dbdb, #dcdede 30%, #d6d8d8 50%, #dbdddd); display: flex; align-items: center; padding: 0 15px; color: #444; }
.foot a { color: #000; border-bottom: 1px dotted #444; line-height: 14px; }
.strong { font-weight: bold; }
.ver { margin-left: 3px; }
.dot { margin: 0 9px; }
.foot-right { margin-left: auto; display: flex; align-items: center; }
.foot-right svg { margin-right: 18px; }
.bar { margin: 0 9px; }
```
